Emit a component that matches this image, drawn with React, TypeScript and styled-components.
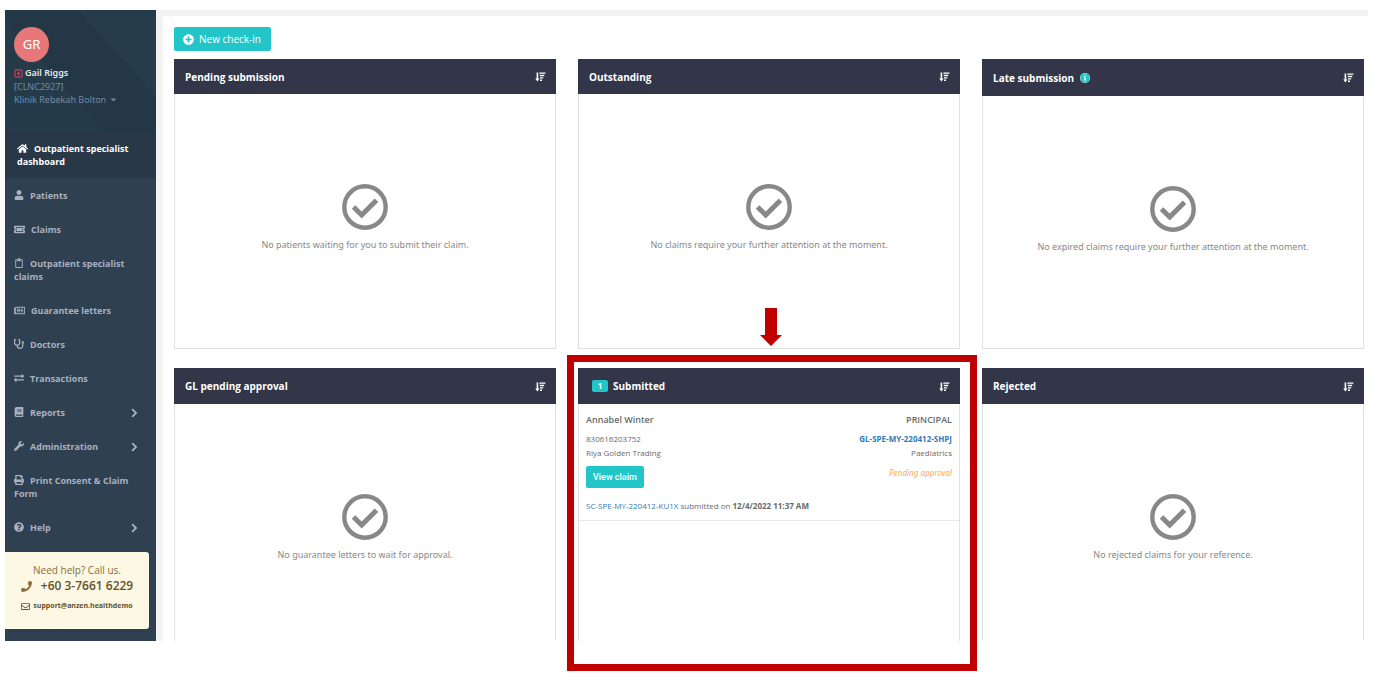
import React from "react";
import styled, { createGlobalStyle, css } from "styled-components";
import {
  FaHome, FaUser, FaTicketAlt, FaRegClipboard, FaRegNewspaper, FaStethoscope, FaExchangeAlt,
  FaBook, FaWrench, FaPrint, FaQuestionCircle, FaPhone, FaRegEnvelope, FaPlusCircle,
  FaInfoCircle, FaRegCaretSquareLeft, FaCaretDown,
} from "react-icons/fa";

const GlobalStyle = createGlobalStyle`
  * { box-sizing: border-box; }
  body {
    margin: 0;
    background: #fff;
    color: #676a6c;
    font-family: "Open Sans", "Noto Sans", sans-serif;
    font-size: 10px;
    line-height: 14px;
  }
  a { color: inherit; text-decoration: none; }
  button { font: inherit; cursor: pointer; }
  h1, h2, h3, p, ul { margin: 0; padding: 0; font-size: inherit; }
  ul { list-style: none; }
  svg { flex: none; }
`;

const wideText = css`
  font-family: "Noto Sans", "Open Sans", sans-serif;
`;

const Shell = styled.div`
  display: flex;
  padding: 10px 9px 47px 5px;
`;

const Sidebar = styled.aside`
  flex: none;
  width: 151px;
  padding-bottom: 12px;
  background: #2f4050;
  color: #a7b1c2;
`;

const Profile = styled.header`
  ${wideText}
  height: 121px;
  padding: 17px 9px 0;
  color: #7289a3;
  font-size: 9px;
  line-height: 13px;
  background:
    linear-gradient(48deg, transparent 70%, #263c4b 70%),
    linear-gradient(228deg, transparent 62%, #253b4a 62%),
    #233747;
`;

const Avatar = styled.div`
  display: flex;
  align-items: center;
  justify-content: center;
  width: 35px;
  height: 35px;
  margin-bottom: 4px;
  border-radius: 50%;
  background: #e77778;
  color: #fff;
  font-size: 13px;
`;

const UserName = styled.p`
  display: flex;
  align-items: center;
  gap: 2px;
  color: #e4e8ec;
  font-weight: 600;
  line-height: 14px;
  svg { color: #ed4560; }
`;

const ClinicButton = styled.button`
  display: flex;
  align-items: center;
  gap: 3px;
  padding: 0;
  border: 0;
  background: none;
  color: inherit;
`;

const NavItem = styled.li<{ $active?: boolean }>`
  a {
    display: block;
    padding: 11px 9px 10px;
    font-size: 9px;
    font-weight: 700;
    line-height: 13px;
    ${(p) => p.$active && css`
      padding-left: 12px;
      background: #293846;
      color: #fff;
    `}
  }
`;

const NavIcon = styled.span`
  display: inline-block;
  margin-right: 6px;
  vertical-align: top;
  svg { display: block; margin-top: 1px; }
`;

const ExpandIcon = styled.svg`
  float: right;
  margin: 2px 9px 0 0;
`;

const HelpCard = styled.section`
  display: flex;
  flex-direction: column;
  align-items: center;
  height: 77px;
  margin: 8px 7px 0 0;
  padding-top: 11px;
  border-radius: 0 3px 3px 0;
  background: #fcf8e3;
  color: #8a6d3b;
`;

const Phone = styled.a`
  display: flex;
  align-items: center;
  gap: 9px;
  color: #66512c;
  font-size: 12px;
  font-weight: 600;
  line-height: 18px;
  svg { color: #8a6d3b; }
`;

const Email = styled.a`
  display: flex;
  align-items: center;
  gap: 3px;
  margin-top: 4px;
  color: #66512c;
  font-size: 7px;
  font-weight: 700;
`;

const Main = styled.main`
  flex: 1;
  min-width: 0;
  padding-right: 4px;
  padding-left: 11px;
  border-top: 6px solid #f3f3f4;
  border-left: 7px solid #f3f3f4;
`;

const CheckInButton = styled.button`
  display: flex;
  align-items: center;
  gap: 5px;
  height: 24px;
  margin: 11px 0 8px;
  padding: 0 10px 0 9px;
  border: 0;
  border-radius: 2px;
  background: #23c6c8;
  color: #fff;
`;

const Board = styled.div`
  display: grid;
  grid-template-columns: repeat(3, 1fr);
  gap: 19px 22px;
`;

const Panel = styled.section<{ $open?: boolean }>`
  display: flex;
  flex-direction: column;
  position: relative;
  min-height: ${(p) => (p.$open ? 273 : 290)}px;
  border: 1px solid #dfe1e3;
  border-top: 0;
  ${(p) => p.$open && css`border-bottom: 0;`}
`;

const PanelHeader = styled.header<{ $height: number }>`
  display: flex;
  align-items: center;
  justify-content: space-between;
  height: ${(p) => p.$height}px;
  margin: 0 -1px;
  padding: 0 10px 0 11px;
  background: #323648;
  color: #fff;
`;

const PanelTitle = styled.h2`
  display: flex;
  align-items: center;
  font-size: 10px;
  font-weight: 700;
  svg { margin-left: 6px; color: #23c6c8; background: #fff; border-radius: 50%; }
`;

const Count = styled.span`
  width: 16px;
  margin: 0 5px 0 3px;
  border-radius: 2px;
  background: #23c6c8;
  font-size: 8px;
  line-height: 12px;
  text-align: center;
`;

const SortButton = styled.button`
  display: flex;
  padding: 0;
  border: 0;
  background: none;
  color: #fff;
`;

const Empty = styled.div`
  ${wideText}
  display: flex;
  flex-direction: column;
  align-items: center;
  gap: 8px;
  padding-top: 90px;
  color: #888;
  font-size: 9px;
`;

const Claim = styled.article`
  padding: 9px 7px 7px;
  border-bottom: 1px solid #e7eaec;
  font-size: 8px;
`;

const ClaimRow = styled.div`
  display: flex;
  justify-content: space-between;
`;

const ClaimHeading = styled(ClaimRow)`
  margin-bottom: 5px;
  font-size: 9px;
  font-weight: 600;
`;

const Link = styled.a`
  color: #337ab7;
`;

const Status = styled.em`
  ${wideText}
  margin-top: 6px;
  color: #f8ac59;
`;

const ViewButton = styled.button`
  height: 22px;
  margin: 6px 0 11px;
  padding: 0 7px;
  border: 0;
  border-radius: 2px;
  background: #23c6c8;
  color: #fff;
  font-family: Roboto, sans-serif;
  font-size: 9px;
  font-weight: 500;
`;

const Highlight = styled.div`
  position: absolute;
  inset: -13px -18px -30px -12px;
  border: 7px solid #c00000;
  pointer-events: none;
`;

const Arrow = styled.svg`
  position: absolute;
  top: -60px;
  left: 181px;
`;

const navigation = [
  { label: "Outpatient specialist dashboard", icon: FaHome, size: 11, active: true },
  { label: "Patients", icon: FaUser, size: 10 },
  { label: "Claims", icon: FaTicketAlt, size: 11 },
  { label: "Outpatient specialist claims", icon: FaRegClipboard, size: 10 },
  { label: "Guarantee letters", icon: FaRegNewspaper, size: 11 },
  { label: "Doctors", icon: FaStethoscope, size: 10 },
  { label: "Transactions", icon: FaExchangeAlt, size: 10 },
  { label: "Reports", icon: FaBook, size: 10, expandable: true },
  { label: "Administration", icon: FaWrench, size: 10, expandable: true },
  { label: "Print Consent & Claim Form", icon: FaPrint, size: 10 },
  { label: "Help", icon: FaQuestionCircle, size: 10, expandable: true },
];

function Chevron() {
  return (
    <ExpandIcon width="7" height="10" viewBox="0 0 7 10" fill="none" stroke="currentColor" strokeWidth="1.8">
      <path d="M1.2 1.2L5 5L1.2 8.8" />
    </ExpandIcon>
  );
}

function SortIcon() {
  return (
    <svg width="11" height="11" viewBox="0 0 11 11" fill="currentColor">
      <path d="M1.6 1.4H3.2V7.6H4.6L2.4 10.4L0.2 7.6H1.6Z" />
      <path d="M4.4 1.4H10.4V2.8H4.4ZM4.8 3.8H9.2V5.2H4.8ZM5 6.2H8.2V7.6H5ZM5 8.6H7V10H5Z" />
    </svg>
  );
}

function CheckMark() {
  return (
    <svg width="46" height="46" viewBox="0 0 46 46" fill="none" stroke="#888">
      <circle cx="23" cy="23" r="20.7" strokeWidth="4.4" />
      <path d="M11.5 23 L19.7 31 L34.5 16.2" strokeWidth="5" />
    </svg>
  );
}

type BoardPanelProps = {
  title: string;
  message?: string;
  open?: boolean;
  info?: boolean;
  count?: number;
  children?: React.ReactNode;
};

function BoardPanel({ title, message, open, info, count, children }: BoardPanelProps) {
  return (
    <Panel $open={open}>
      <PanelHeader $height={info ? 37 : open ? 36 : 35}>
        <PanelTitle>
          {count && <Count>{count}</Count>}
          {title}
          {info && <FaInfoCircle size={10} />}
        </PanelTitle>
        <SortButton aria-label={`Sort ${title}`}><SortIcon /></SortButton>
      </PanelHeader>
      {message && <Empty><CheckMark /><p>{message}</p></Empty>}
      {children}
    </Panel>
  );
}

export default function App() {
  return (
    <>
      <GlobalStyle />
      <Shell>
        <Sidebar>
          <Profile>
            <Avatar>GR</Avatar>
            <UserName><FaRegCaretSquareLeft size={9} />Gail Riggs</UserName>
            <p>[CLNC2927]</p>
            <ClinicButton>Klinik Rebekah Bolton<FaCaretDown size={9} /></ClinicButton>
          </Profile>
          <nav>
            <ul>
              {navigation.map(({ label, icon: Icon, size, active, expandable }) => (
                <NavItem key={label} $active={active}>
                  <a href="#">
                    {expandable && <Chevron />}
                    <NavIcon><Icon size={size} /></NavIcon>
                    {label}
                  </a>
                </NavItem>
              ))}
            </ul>
          </nav>
          <HelpCard>
            <p>Need help? Call us.</p>
            <Phone href="tel:+60376616229"><FaPhone size={11} />+60 3-7661 6229</Phone>
            <Email href="mailto:support@anzen.healthdemo"><FaRegEnvelope size={9} />support@anzen.healthdemo</Email>
          </HelpCard>
        </Sidebar>
        <Main>
          <CheckInButton><FaPlusCircle size={11} />New check-in</CheckInButton>
          <Board>
            <BoardPanel title="Pending submission" message="No patients waiting for you to submit their claim." />
            <BoardPanel title="Outstanding" message="No claims require your further attention at the moment." />
            <BoardPanel title="Late submission" info message="No expired claims require your further attention at the moment." />
            <BoardPanel title="GL pending approval" open message="No guarantee letters to wait for approval." />
            <BoardPanel title="Submitted" open count={1}>
              <Claim>
                <ClaimHeading><span>Annabel Winter</span><span>PRINCIPAL</span></ClaimHeading>
                <ClaimRow><span>830616203752</span><Link href="#"><b>GL-SPE-MY-220412-SHPJ</b></Link></ClaimRow>
                <ClaimRow><span>Riya Golden Trading</span><span>Paediatrics</span></ClaimRow>
                <ClaimRow><ViewButton>View claim</ViewButton><Status>Pending approval</Status></ClaimRow>
                <p><Link href="#">SC-SPE-MY-220412-KU1X</Link> submitted on <b>12/4/2022 11:37 AM</b></p>
              </Claim>
              <Highlight />
              <Arrow width="22" height="38" viewBox="0 0 22 38" fill="#c00000">
                <path d="M5 0H17V27H22L11 38L0 27H5Z" />
              </Arrow>
            </BoardPanel>
            <BoardPanel title="Rejected" open message="No rejected claims for your reference." />
          </Board>
        </Main>
      </Shell>
    </>
  );
}
